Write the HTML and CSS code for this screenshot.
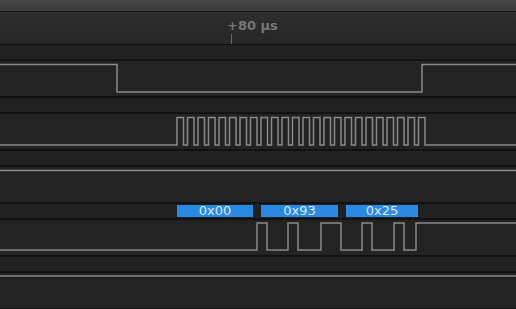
FILE: index.html
```html
<!DOCTYPE html>
<html lang="en">
<head>
    <meta charset="UTF-8">
    <title>Logic Analyzer</title>
    <link rel="stylesheet" href="styles.css">
</head>
<body>

<div class="viewer">
    <div class="toolbar"></div>

    <div class="ruler">
        <div class="marker">
            <span class="marker-text">+80 µs</span>
            <span class="marker-tick"></span>
        </div>
    </div>

    <!-- CS -->
    <div class="lane">
        <div class="lane-notes"></div>
        <div class="lane-signal">
            <svg class="wave" viewBox="0 0 516 35" width="516" height="35">
                <path d="M0 3.5 H117 V31 H422 V3.5 H516"/>
            </svg>
        </div>
    </div>

    <!-- SCK -->
    <div class="lane">
        <div class="lane-notes"></div>
        <div class="lane-signal">
            <svg class="wave" viewBox="0 0 516 35" width="516" height="35">
                <path d="M0 31 H177
                    v-27.5 h6.5 v27.5 h4 v-27.5 h6.5 v27.5 h4 v-27.5 h6.5 v27.5 h4 v-27.5 h6.5 v27.5 h4
                    v-27.5 h6.5 v27.5 h4 v-27.5 h6.5 v27.5 h4 v-27.5 h6.5 v27.5 h4 v-27.5 h6.5 v27.5 h4
                    v-27.5 h6.5 v27.5 h4 v-27.5 h6.5 v27.5 h4 v-27.5 h6.5 v27.5 h4 v-27.5 h6.5 v27.5 h4
                    v-27.5 h6.5 v27.5 h4 v-27.5 h6.5 v27.5 h4 v-27.5 h6.5 v27.5 h4 v-27.5 h6.5 v27.5 h4
                    v-27.5 h6.5 v27.5 h4 v-27.5 h6.5 v27.5 h4 v-27.5 h6.5 v27.5 h4 v-27.5 h6.5 v27.5 h4
                    v-27.5 h6.5 v27.5 h4 v-27.5 h6.5 v27.5 h4 v-27.5 h6.5 v27.5 h4 v-27.5 h6.5 v27.5 H516"/>
            </svg>
        </div>
    </div>

    <!-- MOSI -->
    <div class="lane">
        <div class="lane-notes"></div>
        <div class="lane-signal">
            <svg class="wave" viewBox="0 0 516 35" width="516" height="35">
                <path d="M0 3.5 H516"/>
            </svg>
        </div>
    </div>

    <!-- MISO -->
    <div class="lane">
        <div class="lane-notes">
            <span class="byte" style="left: 177px; width: 76px;">0x00</span>
            <span class="byte" style="left: 261px; width: 77px;">0x93</span>
            <span class="byte" style="left: 346px; width: 72px;">0x25</span>
        </div>
        <div class="lane-signal">
            <svg class="wave" viewBox="0 0 516 35" width="516" height="35">
                <path d="M0 30 H257 V3 H267 V30 H288 V3 H298 V30 H321 V3 H341 V30 H362 V3 H372 V30 H394 V3 H404 V30 H416 V3 H516"/>
            </svg>
        </div>
    </div>

    <!-- extra -->
    <div class="lane">
        <div class="lane-notes"></div>
        <div class="lane-signal">
            <svg class="wave" viewBox="0 0 516 35" width="516" height="35">
                <path d="M0 3 H516"/>
            </svg>
        </div>
    </div>
</div>

</body>
</html>
```

FILE: styles.css
```css
body {
    margin: 0;
    background-color: #1c1c1c;
    font-family: 'DejaVu Sans', 'Liberation Sans', sans-serif;
    overflow: hidden;
}

.viewer {
    width: 516px;
    height: 309px;
    display: flex;
    flex-direction: column;
    overflow: hidden;
}

.toolbar {
    height: 11px;
    flex: none;
    background: linear-gradient(#464646, #3c3c3c);
    border-bottom: 1px solid #151515;
}

.ruler {
    height: 32px;
    flex: none;
    position: relative;
    background: linear-gradient(#2e2e2e, #272727);
    border-bottom: 1px solid #111;
}

.marker {
    position: absolute;
    left: 227px;
    top: 0;
    height: 32px;
    display: flex;
    flex-direction: column;
    justify-content: flex-end;
}

.marker-text {
    font-size: 13px;
    font-weight: bold;
    color: #767676;
    line-height: 14px;
    white-space: nowrap;
}

.marker-tick {
    width: 1px;
    height: 10px;
    margin-left: 4px;
    margin-top: 1px;
    background-color: #666;
}

.lane {
    flex: none;
}

.lane-notes {
    height: 14px;
    position: relative;
    background-color: #212121;
    border-bottom: 2px solid #121212;
}

.lane-signal {
    height: 35px;
    background-color: #232323;
    border-bottom: 2px solid #121212;
}

.wave {
    display: block;
}

.wave path {
    fill: none;
    stroke: #8a8a8a;
    stroke-width: 1.5;
}

.byte {
    position: absolute;
    top: 1px;
    height: 12px;
    background-color: #2a8ae2;
    color: #dbe9f8;
    font-size: 13px;
    line-height: 12px;
    text-align: center;
}
```
